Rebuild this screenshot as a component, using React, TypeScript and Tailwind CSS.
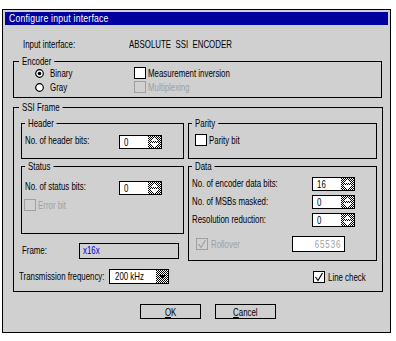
import React from "react";

// Classic "Configure input interface" dialog

const FONT = "font-['Liberation_Sans',Arial,sans-serif]";

// the dialog uses a narrow bitmap font: squeeze Liberation Sans horizontally
const T: React.FC<{ children: React.ReactNode; className?: string }> = ({ children, className = "origin-left" }) => (
  <span className={`inline-block scale-x-75 whitespace-nowrap ${className}`}>{children}</span>
);

const Dither: React.FC<{ w: number; h: number; children?: React.ReactNode }> = ({ w, h, children }) => (
  <svg width={w} height={h} viewBox={`0 0 ${w} ${h}`} className="block" shapeRendering="crispEdges">
    <defs>
      <pattern id="dither" width="2" height="2" patternUnits="userSpaceOnUse">
        <rect width="2" height="2" fill="#fff" />
        <rect width="1" height="1" fill="#000" />
        <rect x="1" y="1" width="1" height="1" fill="#000" />
      </pattern>
    </defs>
    <rect width={w} height={h} fill="url(#dither)" />
    {children}
  </svg>
);

const SpinBox: React.FC<{ value: string }> = ({ value }) => (
  <div className="flex h-[14px] w-[43px] border border-black bg-white">
    <span className="flex-1 pl-[4px] leading-[12px]">
      <T>{value}</T>
    </span>
    <Dither w={13} h={12}>
      <path d="M6.5 1 L10.5 5 H2.5 Z" fill="#fff" />
      <path d="M6.5 11 L10.5 7 H2.5 Z" fill="#fff" />
    </Dither>
  </div>
);

const CheckBox: React.FC<{ checked?: boolean; disabled?: boolean }> = ({ checked, disabled }) => (
  <span
    className={`flex h-[12px] w-[12px] shrink-0 items-center justify-center border ${
      disabled ? "border-[#a0a0a0]" : "border-black bg-white"
    }`}
  >
    {checked && (
      <svg width="10" height="10" viewBox="0 0 10 10">
        <path
          d="M1.5 5 L4 8.5 L8.5 1"
          fill="none"
          stroke={disabled ? "#a0a0a0" : "#000"}
          strokeWidth="1.2"
        />
      </svg>
    )}
  </span>
);

const Radio: React.FC<{ selected?: boolean }> = ({ selected }) => (
  <svg width="9" height="9" viewBox="0 0 9 9" className="block">
    <circle cx="4.5" cy="4.5" r="3.8" fill="#fff" stroke="#000" strokeWidth="1.2" />
    {selected && <circle cx="4.5" cy="4.5" r="1.8" fill="#000" />}
  </svg>
);

const GroupBox: React.FC<{ label: string; className?: string; labelLeft?: string; children?: React.ReactNode }> = ({
  label,
  className = "",
  labelLeft = "left-[5px]",
  children,
}) => (
  <div className={`relative border border-black ${className}`}>
    <span
      className={`absolute -top-[7px] ${labelLeft} origin-left scale-x-75 whitespace-nowrap bg-[#d0d0d0] px-[4px] leading-[12px]`}
    >
      {label}
    </span>
    {children}
  </div>
);

export default function App() {
  return (
    <div className={`h-[341px] w-[396px] bg-white text-[10.5px] text-black ${FONT}`}>
      <div className="ml-[2px] h-[9px]" />
      <div className="ml-[2px] flex h-[324px] w-[389px] flex-col border border-black bg-[#d0d0d0] p-[2px]">
        {/* Title bar */}
        <div className="flex h-[13px] items-center bg-[#0000a0] pl-[4px] text-[11.5px] leading-[13px] tracking-[0.3px] text-white">
          <T>Configure input interface</T>
        </div>

        {/* Input interface */}
        <div className="mt-[13px] flex h-[12px] leading-[12px]">
          <span className="ml-[18px] w-[106px]">
            <T>Input interface:</T>
          </span>
          <T>ABSOLUTE&nbsp; SSI&nbsp; ENCODER</T>
        </div>

        {/* Encoder */}
        <GroupBox label="Encoder" className="ml-[8px] mt-[11px] h-[37px] w-[369px]">
          <div className="grid grid-cols-[99px_1fr] grid-rows-[14px_14px] pl-[21px] pt-[4px] leading-[12px]">
            <div className="flex items-center gap-[6px]">
              <Radio selected />
              <T>Binary</T>
            </div>
            <div className="flex items-center gap-[2px]">
              <CheckBox />
              <T>Measurement inversion</T>
            </div>
            <div className="flex items-center gap-[6px]">
              <Radio />
              <T>Gray</T>
            </div>
            <div className="flex items-center gap-[2px] text-[#a0a0a0]">
              <CheckBox disabled />
              <T>Multiplexing</T>
            </div>
          </div>
        </GroupBox>

        {/* SSI Frame */}
        <GroupBox label="SSI Frame" className="ml-[8px] mt-[9px] h-[185px] w-[370px]">
          <div className="flex gap-[4px] pl-[7px] pt-[15px]">
            {/* left column */}
            <div className="flex w-[163px] flex-col">
              <GroupBox label="Header" labelLeft="left-[3px]" className="h-[36px]">
                <div className="flex items-start pl-[3px] pt-[10px] leading-[12px]">
                  <span className="w-[94px]">
                    <T>No. of header bits:</T>
                  </span>
                  <div className="mt-[1px]">
                    <SpinBox value="0" />
                  </div>
                </div>
              </GroupBox>
              <GroupBox label="Status" labelLeft="left-[3px]" className="mt-[7px] h-[68px]">
                <div className="flex items-start pl-[3px] pt-[13px] leading-[12px]">
                  <span className="w-[94px]">
                    <T>No. of status bits:</T>
                  </span>
                  <div className="mt-[1px]">
                    <SpinBox value="0" />
                  </div>
                </div>
                <div className="mt-[4px] flex items-center gap-[2px] pl-[2px] leading-[12px] text-[#a0a0a0]">
                  <CheckBox disabled />
                  <T>Error bit</T>
                </div>
              </GroupBox>
              <div className="mt-[9px] flex h-[16px] items-center">
                <span className="w-[58px] pl-[1px]">
                  <T>Frame:</T>
                </span>
                <div className="flex h-[16px] w-[100px] items-center border border-black pl-[3px] text-[#0000e0]">
                  <T>x16x</T>
                </div>
              </div>
            </div>

            {/* right column */}
            <div className="flex w-[189px] flex-col">
              <GroupBox label="Parity" labelLeft="left-[3px]" className="h-[36px]">
                <div className="flex items-center gap-[2px] pl-[6px] pt-[10px] leading-[12px]">
                  <CheckBox />
                  <T>Parity bit</T>
                </div>
              </GroupBox>
              <GroupBox label="Data" labelLeft="left-[3px]" className="mt-[7px] h-[95px]">
                <div className="flex flex-col gap-[4px] pl-[3px] pt-[10px] leading-[12px]">
                  {[
                    ["No. of encoder data bits:", "16"],
                    ["No. of MSBs masked:", "0"],
                    ["Resolution reduction:", "0"],
                  ].map(([label, value]) => (
                    <div key={label} className="flex h-[14px] items-start">
                      <span className="w-[120px]">
                        <T>{label}</T>
                      </span>
                      <SpinBox value={value} />
                    </div>
                  ))}
                  <div className="mt-[5px] flex h-[16px] items-center text-[#a0a0a0]">
                    <div className="flex w-[100px] items-center gap-[3px] pl-[4px]">
                      <CheckBox checked disabled />
                      <T>Rollover</T>
                    </div>
                    <div className="flex h-[16px] w-[53px] items-center justify-end border border-black bg-white pr-[3px] tracking-[1.2px]">
                      <T className="origin-right">65536</T>
                    </div>
                  </div>
                </div>
              </GroupBox>
            </div>
          </div>

          {/* frequency + line check */}
          <div className="mt-[8px] flex h-[15px] items-center pl-[5px]">
            <span className="w-[90px]">
              <T>Transmission frequency:</T>
            </span>
            <div className="flex h-[15px] w-[60px] items-center border border-black bg-white">
              <span className="flex-1 pl-[5px] leading-[13px]">
                <T>200 kHz</T>
              </span>
              <Dither w={12} h={13}>
                <path d="M2.5 4.5 H9.5 L6 9 Z" fill="#000" />
              </Dither>
            </div>
            <div className="ml-[144px] flex items-center gap-[3px] leading-[12px]">
              <CheckBox checked />
              <T>Line check</T>
            </div>
          </div>
        </GroupBox>

        {/* buttons */}
        <div className="ml-[135px] mt-[12px] flex gap-[14px]">
          <button className="flex h-[15px] w-[61px] items-center justify-center border border-black leading-[12px]">
            <T className="origin-center">
              <span className="underline">O</span>K
            </T>
          </button>
          <button className="flex h-[15px] w-[61px] items-center justify-center border border-black leading-[12px]">
            <T className="origin-center">
              <span className="underline">C</span>ancel
            </T>
          </button>
        </div>
      </div>
    </div>
  );
}
